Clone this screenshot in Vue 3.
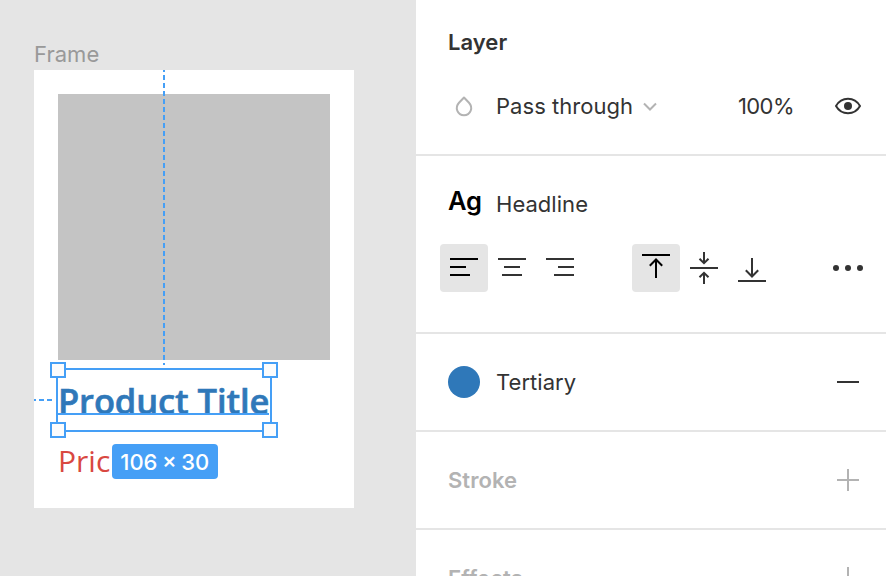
<script setup>
const handles = ['tl', 'tr', 'bl', 'br']
const hAlign = [
  { id: 'left', d: 'M10 15H38M10 23H26M10 31H30' },
  { id: 'center', d: 'M10 15H38M16 23H32M14 31H34' },
  { id: 'right', d: 'M10 15H38M22 23H38M18 31H38' },
]
const vAlign = [
  { id: 'top', d: 'M10 11H38M24 34V16M17.8 21.7L24 15.5L30.2 21.7' },
  { id: 'middle', d: 'M10 24H38M24 8V19M19.5 14.7L24 19.2L28.5 14.7M24 40V29M19.5 33.3L24 28.8L28.5 33.3' },
  { id: 'bottom', d: 'M10 37H38M24 14V32M17.8 26.3L24 32.5L30.2 26.3' },
]
</script>

<template>
  <div class="editor">
    <main class="canvas">
      <div class="frame-label">Frame</div>
      <section class="frame">
        <div class="image"></div>
        <svg class="guides" width="320" height="438">
          <path d="M130 0V295" stroke-dasharray="5 3" stroke-dashoffset="3" />
          <path d="M0 330H20" stroke-dasharray="5 3" stroke-dashoffset="3" />
        </svg>
        <div class="selection">
          <div class="title">Product Title</div>
          <div class="baseline"></div>
          <i v-for="h in handles" :key="h" class="handle" :class="h"></i>
        </div>
        <div class="price">Pric</div>
        <div class="badge">106 × 30</div>
      </section>
    </main>
    <aside class="panel">
      <section class="section layer">
        <h2>Layer</h2>
        <div class="row">
          <svg class="lead" width="32" height="32"><path d="M16 7.5L21 12.8C25.6 17.8 22.4 25.2 16 25.2S6.4 17.8 11 12.8Z" fill="none" stroke="#b3b3b3" stroke-width="2" stroke-linejoin="round" /></svg>
          <span class="name">Pass through</span>
          <svg class="chevron" width="16" height="16"><path d="M2 5.5L8 11.5L14 5.5" fill="none" stroke="#b3b3b3" stroke-width="2" /></svg>
          <span class="opacity">100%</span>
          <svg class="end" width="32" height="32"><path d="M4 16C9.5 6.3 22.5 6.3 28 16C22.5 25.7 9.5 25.7 4 16Z" fill="none" stroke="#333" stroke-width="2" stroke-linejoin="round" /><circle cx="16" cy="16" r="4" fill="#333" /></svg>
        </div>
      </section>
      <section class="section text">
        <div class="row">
          <span class="lead sample">Ag</span>
          <span class="name">Headline</span>
        </div>
        <div class="tools">
          <button v-for="a in hAlign" :key="a.id" :class="{ active: a.id === 'left' }"><svg width="48" height="48"><path :d="a.d" /></svg></button>
          <span class="split"></span>
          <button v-for="a in vAlign" :key="a.id" :class="{ active: a.id === 'top' }"><svg width="48" height="48"><path :d="a.d" /></svg></button>
          <svg class="end" width="32" height="32" fill="#333"><circle cx="4" cy="16" r="3" /><circle cx="16" cy="16" r="3" /><circle cx="28" cy="16" r="3" /></svg>
        </div>
      </section>
      <section class="section single">
        <span class="lead swatch"></span>
        <span class="name">Tertiary</span>
        <svg class="end" width="32" height="32"><path d="M5 16H27" stroke="#333" stroke-width="2" /></svg>
      </section>
      <section v-for="s in ['Stroke', 'Effects']" :key="s" class="section single muted">
        <h2>{{ s }}</h2>
        <svg class="end" width="32" height="32"><path d="M5 16H27M16 5V27" stroke="#b3b3b3" stroke-width="2" /></svg>
      </section>
    </aside>
  </div>
</template>

<style>
body { margin: 0; overflow: hidden; }
</style>

<style scoped>
* { box-sizing: border-box; }
.editor { display: flex; width: 886px; height: 576px; overflow: hidden; background: #e5e5e5; font: 22px/32px Inter, sans-serif; letter-spacing: .04px; color: #333; }
.canvas { width: 416px; padding: 38px 34px 0; }
.frame-label { height: 32px; color: #999; }
.frame { position: relative; width: 320px; height: 438px; padding: 24px; background: #fff; }
.image { width: 272px; height: 266px; background: #c4c4c4; }
.guides { position: absolute; top: 0; left: 0; fill: none; stroke: #459ff6; stroke-width: 2; }
.selection { position: absolute; left: 22px; top: 298px; width: 216px; height: 64px; border: 2px solid #459ff6; }
.title { font: 600 34.5px/61px "Open Sans", sans-serif; letter-spacing: -.1px; color: #2f78b9; -webkit-text-stroke: .6px #2f78b9; white-space: nowrap; }
.baseline { position: absolute; left: 0; top: 43px; width: 211px; height: 2px; background: #459ff6; }
.handle { position: absolute; width: 16px; height: 16px; border: 2px solid #459ff6; background: #fcfcfc; }
.tl { left: -8px; top: -8px; }
.tr { right: -8px; top: -8px; }
.bl { left: -8px; bottom: -8px; }
.br { right: -8px; bottom: -8px; }
.price { margin-top: 79px; font: 30px/44px "Open Sans", sans-serif; letter-spacing: 0; color: #d94841; }
.badge { position: absolute; left: 78px; top: 374px; width: 105.5px; height: 34.5px; border-radius: 4px; background: #459ff6; color: #fff; font-weight: 500; line-height: 36px; letter-spacing: 0; word-spacing: -1.3px; text-align: center; white-space: nowrap; }
.panel { width: 470px; background: #fff; }
.section { border-bottom: 2px solid #e5e5e5; padding: 0 22px 0 32px; }
h2 { margin: 0; font-size: 22px; line-height: 32px; font-weight: 600; letter-spacing: .04px; }
.row { display: flex; align-items: center; height: 32px; }
.layer { height: 156px; padding-top: 26px; }
.layer .row { margin-top: 32px; }
.lead { flex: none; width: 32px; margin-right: 16px; }
.chevron { margin-left: 9px; }
.opacity { margin-left: auto; margin-right: 38px; letter-spacing: -.55px; }
.end { flex: none; }
.layer .end { margin-left: 0; }
.text { height: 178px; padding-top: 32px; }
.sample { font-weight: 600; font-size: 25.5px; line-height: 26px; height: 32px; color: #000; letter-spacing: -.2px; }
.tools { display: flex; align-items: center; margin: 24px 0 0 -8px; }
.tools .end, .single .end { margin-left: auto; }
.split { width: 48px; }
button { display: block; width: 48px; height: 48px; padding: 0; border: 0; border-radius: 4px; background: none; }
button svg { display: block; fill: none; stroke: #333; stroke-width: 2; }
.active { background: #e5e5e5; }
.active svg { stroke: #000; }
.single { display: flex; align-items: center; height: 98px; }
.swatch { height: 32px; border-radius: 50%; background: #2f78b9; }
.muted h2 { color: #b3b3b3; }
</style>
